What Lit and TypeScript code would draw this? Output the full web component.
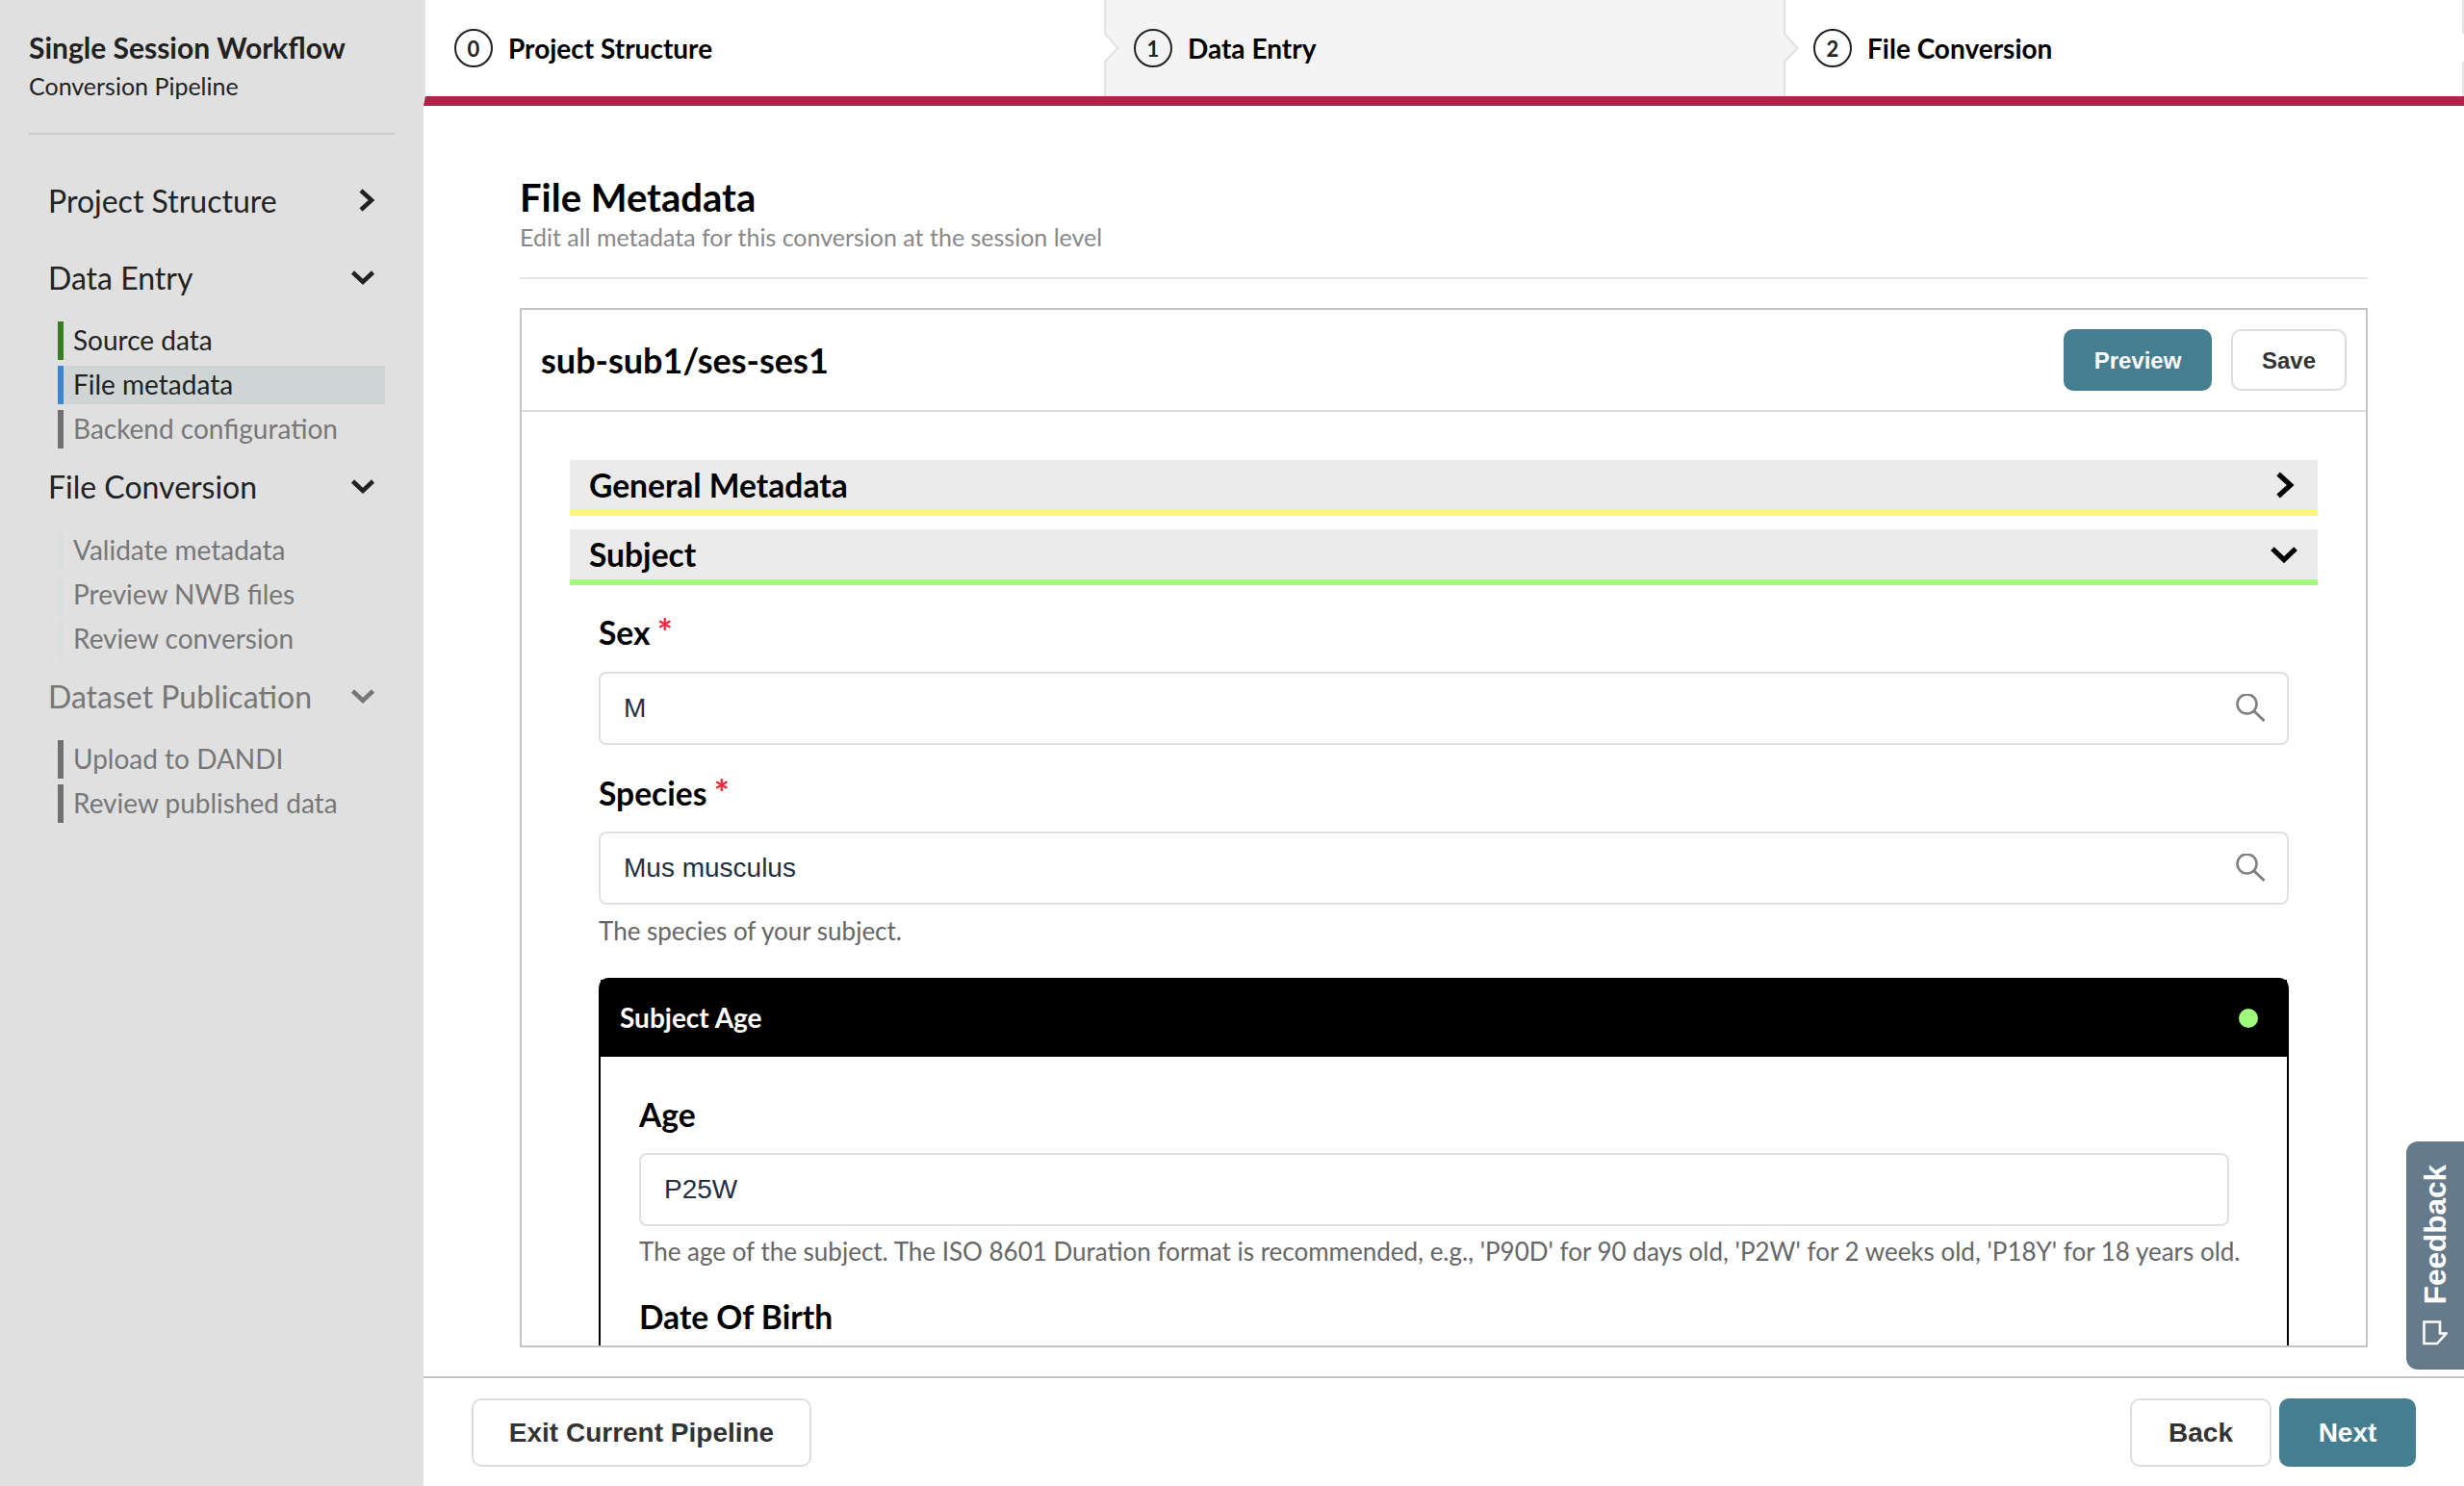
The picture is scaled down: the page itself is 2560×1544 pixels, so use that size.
import { LitElement, html, css, svg } from 'lit';
import { customElement } from 'lit/decorators.js';

const chevronRight = () => html`<svg class="chev-r" width="18" height="26" viewBox="0 0 18 26"><path d="M3 3 L14 13 L3 23" fill="none" stroke="currentColor" stroke-width="4.5"/></svg>`;
const chevronDown = () => html`<svg class="chev-d" width="26" height="17" viewBox="0 0 26 17"><path d="M2.5 3 L13 13 L23.5 3" fill="none" stroke="currentColor" stroke-width="4.5"/></svg>`;
const searchIcon = () => html`<svg class="search" width="30" height="30" viewBox="0 0 30 30"><circle cx="11.5" cy="10.5" r="10" fill="none" stroke="#808080" stroke-width="2.6"/><path d="M19 18 L29.5 28" stroke="#808080" stroke-width="3"/></svg>`;

// divider between steps, filled with the colour of the step before it
const tabEdge = (fill: string) => html`<svg class="edge" width="18" height="100" viewBox="0 0 18 100">
  ${svg`<path d="M1 0 V35 L14.5 50 L1 64 V100 H0 V0 Z" fill="${fill}"/><path d="M1 0 V35 L14.5 50 L1 64 V100" fill="${fill}" stroke="#e4e4e4" stroke-width="2.4"/>`}
</svg>`;

@customElement('app-root')
export class AppRoot extends LitElement {
  static styles = css`
    :host {
      display: flex;
      width: 100%;
      height: 100vh;
      overflow: hidden;
      position: relative;
      background: #fff;
      color: #000;
      font-family: Lato, "Noto Sans", sans-serif;
    }
    .sidebar {
      width: 440px;
      flex: none;
      box-sizing: border-box;
      background: #e0e0e0;
      padding: 26px 30px 0;
      color: #222;
    }
    .app-title {
      font-size: 30px;
      font-weight: 700;
      line-height: 46px;
    }
    .app-sub {
      font-size: 25px;
      line-height: 34px;
    }
    .side-rule {
      height: 2px;
      background: #cccccc;
      margin: 32px 0 43px;
    }
    .group-head {
      height: 50px;
      display: flex;
      align-items: center;
      justify-content: space-between;
      padding: 0 20px;
      font-size: 32px;
      color: #222;
    }
    .group-head.off { color: #777; }
    .group.closed { margin-bottom: 30px; }
    .group.first { margin-bottom: 14px; }
    .group.mid { margin-bottom: 14px; }
    .group.first .items { margin-top: 21px; }
    .group.mid .items { margin-top: 22px; }
    .items {
      display: flex;
      flex-direction: column;
      gap: 6px;
      margin: 21px 0 0 30px;
      width: 340px;
    }
    .item {
      height: 40px;
      border-left: 6px solid #707070;
      padding-left: 10px;
      font-size: 28px;
      line-height: 39px;
      color: #777;
    }
    .item.done { border-left-color: #3a7d24; color: #222; }
    .item.active { border-left-color: #3f84d0; background: #cfd4d4; color: #222; }
    .item.faint { border-left-color: #d9dede; }

    .main {
      flex: 1;
      min-width: 0;
      display: flex;
      flex-direction: column;
    }
    .steps {
      display: flex;
      height: 100px;
      flex: none;
      border-bottom: 10px solid #a92649;
      border-left: 2px solid #e4e4e4;
      box-sizing: content-box;
      position: relative;
    }
    .step {
      flex: 1;
      position: relative;
      display: flex;
      align-items: center;
      gap: 16px;
      padding-left: 30px;
      font-size: 28px;
      font-weight: 700;
      color: #000;
    }
    .step.grey { background: #f4f4f4; }
    .edge { position: absolute; left: -1px; top: 0; }
    .step-end {
      position: absolute;
      right: 0;
      top: 0;
      width: 2px;
      height: 35px;
      background: #e4e4e4;
    }
    .step-end.low { top: 64px; height: 36px; }
    .num {
      width: 40px;
      height: 40px;
      flex: none;
      box-sizing: border-box;
      border: 2.5px solid #222;
      border-radius: 50%;
      display: flex;
      align-items: center;
      justify-content: center;
      font-size: 22px;
      font-weight: 700;
      color: #222;
    }
    .content {
      flex: 1;
      min-height: 0;
      display: flex;
      flex-direction: column;
      padding: 70px 100px 30px;
    }
    h1 {
      margin: 0;
      font-size: 40px;
      line-height: 50px;
      font-weight: 700;
    }
    .lead {
      font-size: 25px;
      line-height: 32px;
      color: #888;
    }
    .rule {
      height: 2px;
      background: #e5e5e5;
      flex: none;
      margin: 26px 0 30px;
    }
    .panel {
      flex: 1;
      min-height: 0;
      border: 2px solid #c4c4c4;
      overflow: hidden;
    }
    .panel-head {
      height: 104px;
      display: flex;
      align-items: center;
      justify-content: space-between;
      padding: 0 20px;
      border-bottom: 2px solid #dddddd;
    }
    .session {
      font-size: 36px;
      font-weight: 700;
    }
    .btn-row { display: flex; gap: 20px; }
    .btn {
      box-sizing: border-box;
      display: flex;
      align-items: center;
      justify-content: center;
      border: 2px solid #dddddd;
      border-radius: 10px;
      background: #fff;
      color: #333;
      font-family: "Liberation Sans", Arial, sans-serif;
      font-weight: 700;
    }
    .btn.primary { background: #457e91; border-color: #457e91; color: #fff; }
    .btn.small { height: 64px; font-size: 24px; padding-top: 1px; }
    .btn.big { height: 71px; font-size: 28px; }
    .preview { width: 154px; }
    .save { width: 120px; }
    .panel-body { padding: 50px 50px 0; }
    .acc {
      height: 52px;
      display: flex;
      align-items: center;
      justify-content: space-between;
      padding: 0 22px 0 20px;
      background: #ebebeb;
      border-bottom: 6px solid #fff770;
      font-size: 33.6px;
      font-weight: 700;
      margin-bottom: 14px;
      color: #000;
    }
    .acc.ok { border-bottom-color: #a0fb7d; margin-bottom: 0; }
    .acc svg { transform: scale(1.15); }
    .acc .chev-r { margin-right: 3px; }
    .acc-body { padding: 27px 30px 0; }
    .label {
      font-size: 33.6px;
      font-weight: 700;
      line-height: 44px;
      margin-bottom: 19px;
      white-space: nowrap;
    }
    .label.below { margin-top: 28px; margin-bottom: 18px; }
    .req {
      color: #f0293f;
      font-size: 38px;
      line-height: 0;
      margin-left: -1px;
      vertical-align: -1px;
    }
    .input {
      box-sizing: border-box;
      height: 76px;
      display: flex;
      align-items: center;
      justify-content: space-between;
      padding: 0 23px 0 24px;
      border: 2px solid #e0e0e0;
      border-radius: 8px;
      font-family: "Liberation Sans", Arial, sans-serif;
      font-size: 28px;
      color: #24303f;
    }
    .help {
      font-size: 26px;
      line-height: 36px;
      color: #666;
      margin-top: 9px;
      white-space: nowrap;
    }
    .card {
      margin-top: 31px;
      border: 2px solid #000;
      border-bottom: 0;
      border-radius: 10px 10px 0 0;
    }
    .card-head {
      height: 78px;
      padding: 0 30px 2px 20px;
      background: #000;
      color: #fff;
      display: flex;
      align-items: center;
      justify-content: space-between;
      font-size: 28px;
      font-weight: 700;
    }
    .dot {
      width: 20px;
      height: 20px;
      border-radius: 50%;
      background: #a0fb7d;
      margin-top: 2px;
    }
    .card-body { padding: 38px 60px 80px 40px; }
    .card-body .label { margin-bottom: 18px; }
    .card-body .help { margin-top: 8px; }
    .card-body .label.below { margin-top: 28px; }
    .footer {
      flex: none;
      height: 112px;
      border-top: 2px solid #c4c4c4;
      box-sizing: content-box;
      display: flex;
      align-items: flex-start;
      justify-content: space-between;
      padding: 0 50px;
    }
    .footer .btn { margin-top: 21px; }
    .footer-right { display: flex; gap: 8px; }
    .exit { width: 353px; }
    .back { width: 147px; }
    .next { width: 142px; }
    .feedback {
      position: absolute;
      right: 0;
      top: 1186px;
      width: 60px;
      height: 237px;
      box-sizing: border-box;
      background: #657a8b;
      border-radius: 12px 0 0 12px;
      display: flex;
      flex-direction: column;
      align-items: center;
      padding-top: 24px;
      gap: 17px;
      color: #fff;
      font-family: "Liberation Sans", Arial, sans-serif;
      font-weight: 700;
      font-size: 31.5px;
    }
    .feedback span {
      writing-mode: vertical-rl;
      transform: rotate(180deg);
      line-height: 30px;
    }
  `;

  render() {
    return html`
      <aside class="sidebar">
        <div class="app-title">Single Session Workflow</div>
        <div class="app-sub">Conversion Pipeline</div>
        <div class="side-rule"></div>
        <div class="group closed">
          <div class="group-head">Project Structure ${chevronRight()}</div>
        </div>
        <div class="group first">
          <div class="group-head">Data Entry ${chevronDown()}</div>
          <div class="items">
            <div class="item done">Source data</div>
            <div class="item active">File metadata</div>
            <div class="item">Backend configuration</div>
          </div>
        </div>
        <div class="group mid">
          <div class="group-head">File Conversion ${chevronDown()}</div>
          <div class="items">
            <div class="item faint">Validate metadata</div>
            <div class="item faint">Preview NWB files</div>
            <div class="item faint">Review conversion</div>
          </div>
        </div>
        <div class="group">
          <div class="group-head off">Dataset Publication ${chevronDown()}</div>
          <div class="items">
            <div class="item">Upload to DANDI</div>
            <div class="item">Review published data</div>
          </div>
        </div>
      </aside>

      <div class="main">
        <div class="steps">
          <div class="step"><div class="num">0</div>Project Structure</div>
          <div class="step grey">${tabEdge('#ffffff')}<div class="num">1</div>Data Entry</div>
          <div class="step">${tabEdge('#f4f4f4')}<div class="num">2</div>File Conversion
            <i class="step-end"></i><i class="step-end low"></i>
          </div>
        </div>

        <div class="content">
          <h1>File Metadata</h1>
          <div class="lead">Edit all metadata for this conversion at the session level</div>
          <div class="rule"></div>
          <div class="panel">
            <div class="panel-head">
              <div class="session">sub-sub1/ses-ses1</div>
              <div class="btn-row">
                <div class="btn small primary preview">Preview</div>
                <div class="btn small save">Save</div>
              </div>
            </div>
            <div class="panel-body">
              <div class="acc">General Metadata ${chevronRight()}</div>
              <div class="acc ok">Subject ${chevronDown()}</div>
              <div class="acc-body">
                <div class="label">Sex <span class="req">*</span></div>
                <div class="input">M ${searchIcon()}</div>
                <div class="label below">Species <span class="req">*</span></div>
                <div class="input">Mus musculus ${searchIcon()}</div>
                <div class="help">The species of your subject.</div>
                <div class="card">
                  <div class="card-head">Subject Age <div class="dot"></div></div>
                  <div class="card-body">
                    <div class="label">Age</div>
                    <div class="input">P25W</div>
                    <div class="help">The age of the subject. The ISO 8601 Duration format is recommended, e.g., 'P90D' for 90 days old, 'P2W' for 2 weeks old, 'P18Y' for 18 years old.</div>
                    <div class="label below">Date Of Birth</div>
                  </div>
                </div>
              </div>
            </div>
          </div>
        </div>

        <div class="footer">
          <div class="btn big exit">Exit Current Pipeline</div>
          <div class="footer-right">
            <div class="btn big back">Back</div>
            <div class="btn big primary next">Next</div>
          </div>
        </div>
      </div>

      <div class="feedback">
        <span>Feedback</span>
        <svg width="26" height="26" viewBox="0 0 26 26"><path d="M1.5 1.5 H18 V13.5 H24.5 L15 24 H1.5 Z" fill="none" stroke="#fff" stroke-width="2.6"/></svg>
      </div>
    `;
  }
}
